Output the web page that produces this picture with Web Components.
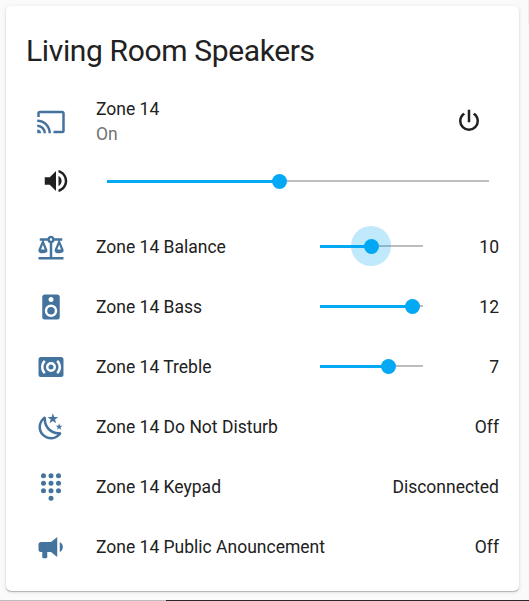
<!DOCTYPE html>
<html lang="en">
<head>
<meta charset="utf-8">
<title>Living Room Speakers</title>
<style>
html,body{margin:0;height:100%}
body{background:#fafafa;font:17.5px/25px Roboto,"Liberation Sans",sans-serif;color:#212121;box-sizing:border-box;height:601px;padding:6px 10px 0 6px;position:relative;overflow:hidden}
.edge{position:absolute;left:0;right:0;bottom:0;height:1px;background:linear-gradient(90deg,#bdbdbd 166px,#29272b 166px)}
.side{position:absolute;right:0;top:0;width:1px;height:24px;background:#eee}
</style>
</head>
<body>
<entities-card heading="Living Room Speakers">
  <media-row icon="cast" name="Zone 14" state="On" volume="45.2"></media-row>
  <entity-row icon="balance" name="Zone 14 Balance"><range-slider value="50" pressed></range-slider><span>10</span></entity-row>
  <entity-row icon="speaker" name="Zone 14 Bass"><range-slider value="90"></range-slider><span>12</span></entity-row>
  <entity-row icon="surround" name="Zone 14 Treble"><range-slider value="66.5"></range-slider><span>7</span></entity-row>
  <entity-row icon="night" name="Zone 14 Do Not Disturb"><span>Off</span></entity-row>
  <entity-row icon="dialpad" name="Zone 14 Keypad"><span>Disconnected</span></entity-row>
  <entity-row icon="bullhorn" name="Zone 14 Public Anouncement"><span>Off</span></entity-row>
</entities-card>
<div class="edge"></div><div class="side"></div>
<script>
const dot = (x, y) => `M${x - 2},${y}a2,2 0 1,0 4,0a2,2 0 1,0 -4,0Z`;
const ICONS = {
  cast: "M1,10V12A9,9 0 0,1 10,21H12C12,14.92 7.07,10 1,10M1,14V16A5,5 0 0,1 6,21H8A7,7 0 0,0 1,14M1,18V21H4A3,3 0 0,0 1,18M21,3H3C1.89,3 1,3.89 1,5V8H3V5H21V19H14V21H21A2,2 0 0,0 23,19V5C23,3.89 22.1,3 21,3Z",
  volume: "M14,3.23V5.29C16.89,6.15 19,8.83 19,12C19,15.17 16.89,17.84 14,18.7V20.77C18,19.86 21,16.28 21,12C21,7.72 18,4.14 14,3.23M16.5,12C16.5,10.23 15.5,8.71 14,7.97V16C15.5,15.29 16.5,13.76 16.5,12M3,9V15H7L12,20V4L7,9H3Z",
  power: "M16.56,5.44L15.11,6.89C16.84,7.94 18,9.83 18,12A6,6 0 0,1 12,18A6,6 0 0,1 6,12C6,9.83 7.16,7.94 8.88,6.88L7.44,5.44C5.36,6.88 4,9.28 4,12A8,8 0 0,0 12,20A8,8 0 0,0 20,12C20,9.28 18.64,6.88 16.56,5.44M13,3H11V13H13",
  balance: "M12,3C10.73,3 9.6,3.8 9.18,5H3V7H4.95L2,14C1.53,16 3,17 5.5,17C8,17 9.56,16 9,14L6.05,7H9.17C9.5,7.85 10.15,8.5 11,8.83V20H2V22H22V20H13V8.82C13.85,8.5 14.5,7.85 14.82,7H17.95L15,14C14.53,16 16,17 18.5,17C21,17 22.56,16 22,14L19.05,7H21V5H14.83C14.4,3.8 13.27,3 12,3M12,5A1,1 0 0,1 13,6A1,1 0 0,1 12,7A1,1 0 0,1 11,6A1,1 0 0,1 12,5M5.5,10.25L7,14H4L5.5,10.25M18.5,10.25L20,14H17L18.5,10.25Z",
  speaker: "M12,12A3,3 0 0,0 9,15A3,3 0 0,0 12,18A3,3 0 0,0 15,15A3,3 0 0,0 12,12M12,20A5,5 0 0,1 7,15A5,5 0 0,1 12,10A5,5 0 0,1 17,15A5,5 0 0,1 12,20M12,4A2,2 0 0,1 14,6A2,2 0 0,1 12,8C10.89,8 10,7.1 10,6C10,4.89 10.89,4 12,4M17,2H7C5.89,2 5,2.89 5,4V20A2,2 0 0,0 7,22H17A2,2 0 0,0 19,20V4C19,2.89 18.1,2 17,2Z",
  surround: "M12,14A2,2 0 0,1 10,12A2,2 0 0,1 12,10A2,2 0 0,1 14,12A2,2 0 0,1 12,14M12,8A4,4 0 0,0 8,12A4,4 0 0,0 12,16A4,4 0 0,0 16,12A4,4 0 0,0 12,8M17.66,17.66L16.24,16.24C17.42,15.07 18,13.54 18,12C18,10.46 17.41,8.93 16.24,7.76L17.66,6.34C19.22,7.9 20,9.95 20,12C20,14.05 19.22,16.1 17.66,17.66M7.76,7.76C6.59,8.93 6,10.46 6,12C6,13.54 6.59,15.07 7.76,16.24L6.34,17.66C4.78,16.1 4,14.05 4,12C4,9.95 4.78,7.9 6.34,6.34L7.76,7.76M20,4H4A2,2 0 0,0 2,6V18A2,2 0 0,0 4,20H20A2,2 0 0,0 22,18V6A2,2 0 0,0 20,4Z",
  night: "M17.75,4.09L15.22,6.03L16.13,9.09L13.5,7.28L10.87,9.09L11.78,6.03L9.25,4.09L12.44,4L13.5,1L14.56,4L17.75,4.09M21.25,11L19.61,12.25L20.2,14.23L18.5,13.06L16.8,14.23L17.39,12.25L15.75,11L17.81,10.95L18.5,9L19.19,10.95L21.25,11M18.97,15.95C19.8,15.87 20.69,17.05 20.16,17.8C19.84,18.25 19.5,18.67 19.08,19.07C15.17,23 8.84,23 4.94,19.07C1.03,15.17 1.03,8.83 4.94,4.93C5.34,4.53 5.76,4.17 6.21,3.85C6.96,3.32 8.14,4.21 8.06,5.04C7.79,7.9 8.75,10.87 10.95,13.06C13.14,15.26 16.1,16.22 18.97,15.95M17.33,17.97C14.5,17.81 11.7,16.64 9.53,14.5C7.36,12.31 6.2,9.5 6.04,6.68C3.23,9.82 3.34,14.64 6.35,17.66C9.37,20.67 14.19,20.78 17.33,17.97Z",
  dialpad: [3, 9, 15].flatMap(y => [6, 12, 18].map(x => dot(x, y))).join("") + dot(12, 21),
  bullhorn: "M12,8H4A2,2 0 0,0 2,10V14A2,2 0 0,0 4,16H5V20A1,1 0 0,0 6,21H8A1,1 0 0,0 9,20V16H12L17,20V4L12,8M21.5,12C21.5,13.71 20.54,15.26 19,16V8C20.53,8.75 21.5,10.3 21.5,12Z"
};

class Base extends HTMLElement {
  connectedCallback() {
    if (!this.shadowRoot) this.attachShadow({ mode: "open" }).innerHTML = this.render();
  }
  attr(n) { return this.getAttribute(n) || ""; }
}

customElements.define("mdi-icon", class extends Base {
  render() {
    return `<style>:host{display:block;width:30px;height:30px;flex:none}svg{display:block;width:100%;height:100%;fill:currentColor}</style>
    <svg viewBox="0 0 24 24"><path fill-rule="${this.attr("name") === "surround" ? "evenodd" : "nonzero"}" d="${ICONS[this.attr("name")]}"/></svg>`;
  }
});

customElements.define("range-slider", class extends Base {
  render() {
    return `<style>
    :host{display:block;position:relative;height:15px;width:103px;flex:none}
    .rail,.fill{position:absolute;left:0;top:6px}
    .rail{right:0;height:2px;background:#bdbdbd}
    .fill{width:${this.attr("value")}%;height:3px;background:#03a9f4}
    .knob{position:absolute;left:${this.attr("value")}%;top:0;width:15px;height:15px;margin-left:-7.5px;border-radius:50%;background:#03a9f4}
    :host([pressed]) .knob::before{content:"";position:absolute;inset:-13px -12px -12px -13px;border-radius:50%;background:#03a9f4;opacity:.25}
    </style><div class="rail"></div><div class="fill"></div><div class="knob"></div>`;
  }
});

customElements.define("entity-row", class extends Base {
  render() {
    return `<style>
    :host{display:flex;align-items:center;height:60px;padding:0 20px 0 30px}
    mdi-icon{color:#44739e;margin-right:30px}
    .name{flex:1;white-space:nowrap}
    ::slotted(span){min-width:76px;text-align:right}
    ::slotted(range-slider){margin-bottom:1px}
    </style><mdi-icon name="${this.attr("icon")}"></mdi-icon><div class="name">${this.attr("name")}</div><slot></slot>`;
  }
});

customElements.define("media-row", class extends Base {
  render() {
    return `<style>
    :host{display:block;padding:0 30px}
    .info{display:flex;align-items:center;height:50px}
    .info>mdi-icon:first-child{color:#44739e;margin-right:30px}
    .text{flex:1}
    .state{color:#727272}
    .power{margin:0 5px 3px 0}
    .volume{display:flex;align-items:center;height:30px;margin-top:19px;padding-left:5px}
    range-slider{flex:1;width:auto;margin-left:36px}
    </style>
    <div class="info"><mdi-icon name="${this.attr("icon")}"></mdi-icon>
      <div class="text"><div>${this.attr("name")}</div><div class="state">${this.attr("state")}</div></div>
      <mdi-icon class="power" name="power"></mdi-icon></div>
    <div class="volume"><mdi-icon name="volume"></mdi-icon><range-slider value="${this.attr("volume")}"></range-slider></div>`;
  }
});

customElements.define("entities-card", class extends Base {
  render() {
    return `<style>
    :host{display:block;box-sizing:border-box;height:585px;background:#fff;border-radius:5px;box-shadow:0 1px 1px -1px rgba(0,0,0,.35),0 1px 1px 0 rgba(0,0,0,.2),0 1px 4px 0 rgba(0,0,0,.12)}
    h1{margin:0;padding:20px 20px 0;height:51px;font-size:30px;font-weight:400;line-height:50px;letter-spacing:-.36px;white-space:nowrap}
    .rows{padding-top:20px}
    ::slotted(media-row){margin-bottom:21px}
    </style><h1>${this.attr("heading")}</h1><div class="rows"><slot></slot></div>`;
  }
});
</script>
</body>
</html>
